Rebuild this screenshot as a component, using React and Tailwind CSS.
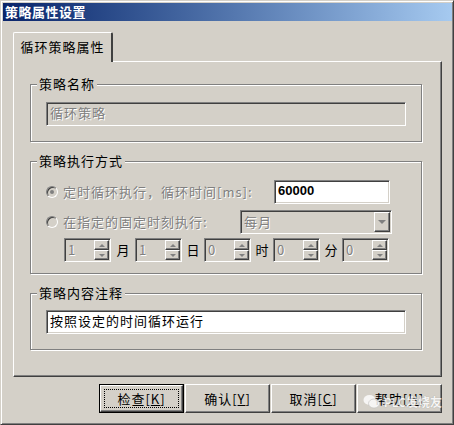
import React from "react";

const font = { fontFamily: '"Noto Sans CJK SC", "Liberation Sans", sans-serif' };

const sunken =
  "border border-t-[#808080] border-l-[#808080] border-b-white border-r-white shadow-[inset_1px_1px_0_#404040,inset_-1px_-1px_0_#d4d0c8]";
const raised =
  "border border-t-white border-l-white border-b-[#404040] border-r-[#404040] shadow-[inset_-1px_-1px_0_#808080]";
const disabledText = "text-[#808080] [text-shadow:1px_1px_0_#fff]";

function Group({ label, className, children }) {
  return (
    <div className={`relative border border-[#808080] shadow-[1px_1px_0_#fff,inset_1px_1px_0_#fff] ${className}`}>
      <span className="absolute left-[6px] top-[-9px] bg-[#d4d0c8] px-[2px] text-[13px] leading-[16px] tracking-[1px] text-black">
        {label}
      </span>
      {children}
    </div>
  );
}

function Radio({ checked }) {
  return (
    <div className="flex h-[12px] w-[12px] items-center justify-center rounded-full border border-t-[#808080] border-l-[#808080] border-b-white border-r-white shadow-[inset_1px_1px_0_#404040] bg-[#d4d0c8]">
      {checked && <div className="h-[4px] w-[4px] rounded-full bg-[#808080]" />}
    </div>
  );
}

function Tri({ up }) {
  return (
    <div
      className={`h-0 w-0 border-l-[3px] border-r-[3px] border-l-transparent border-r-transparent ${
        up ? "border-b-[3px] border-b-[#808080]" : "border-t-[3px] border-t-[#808080]"
      }`}
    />
  );
}

function Spin({ value }) {
  return (
    <div className={`flex h-[24px] w-[47px] items-stretch bg-[#d4d0c8] p-[1px] ${sunken}`}>
      <div className={`flex-1 pl-[2px] text-[13px] leading-[20px] ${disabledText}`}>{value}</div>
      <div className="flex w-[15px] flex-col">
        <div className={`flex flex-1 items-center justify-center bg-[#d4d0c8] ${raised}`}>
          <Tri up />
        </div>
        <div className={`flex flex-1 items-center justify-center bg-[#d4d0c8] ${raised}`}>
          <Tri />
        </div>
      </div>
    </div>
  );
}

function Btn({ label, hot, isDefault }) {
  const inner = (
    <div className={`relative flex h-full w-full items-center justify-center bg-[#d4d0c8] ${raised}`}>
      {isDefault && <div className="absolute inset-[3px] border border-dotted border-black" />}
      <span className="text-[13px] leading-[16px] tracking-[1px]">
        {label}[<span className="underline">{hot}</span>]
      </span>
    </div>
  );
  return (
    <div className={`h-[29px] w-[85px] ${isDefault ? "border border-black" : ""}`}>{inner}</div>
  );
}

export default function App() {
  return (
    <div
      style={font}
      className="h-[425px] w-[454px] overflow-hidden border border-t-[#d4d0c8] border-l-[#d4d0c8] border-r-[#404040] border-b-[#404040] bg-[#d4d0c8] pl-[2px] pt-[2px] pr-[1px] pb-[1px] shadow-[inset_1px_1px_0_#fff,inset_-1px_-1px_0_#808080] text-black"
    >
      {/* title bar */}
      <div className="flex h-[18px] items-center bg-gradient-to-r from-[#0a246a] to-[#a6caf0] pl-[2px]">
        <span className="text-[13px] font-bold leading-[18px] tracking-[0.5px] text-white">策略属性设置</span>
      </div>

      <div className="pl-[10px] pt-[11px]">
        {/* tab */}
        <div className="relative z-10 -mb-px flex h-[30px] w-[100px] items-center justify-center rounded-t-[2px] border-l border-t border-r-2 border-l-white border-t-white border-r-[#404040] bg-[#d4d0c8] pb-[2px]">
          <span className="text-[13px] leading-[16px] tracking-[1px]">循环策略属性</span>
        </div>

        {/* panel */}
        <div className="h-[316px] w-[429px] border-l border-t border-r border-b border-l-white border-t-white border-r-[#404040] border-b-[#404040] shadow-[inset_-1px_-1px_0_#808080] pl-[16px] pt-[22px]">
          <Group label="策略名称" className="h-[58px] w-[392px] pl-[15px] pt-[17px]">
            <div className={`h-[24px] w-[360px] bg-[#d4d0c8] pl-[3px] text-[13px] leading-[20px] tracking-[1px] ${sunken} ${disabledText}`}>
              循环策略
            </div>
          </Group>

          <Group label="策略执行方式" className="mt-[19px] h-[113px] w-[392px] pl-[15px] pt-[18px]">
            <div className="flex items-center">
              <div className="flex w-[228px] items-center">
                <Radio checked />
                <span className={`ml-[5px] text-[13px] leading-[16px] tracking-[1px] ${disabledText}`}>
                  定时循环执行，循环时间[ms]:
                </span>
              </div>
              <div className={`h-[24px] w-[116px] bg-white pl-[3px] text-[13px] font-bold leading-[20px] ${sunken}`} style={{ fontFamily: '"Liberation Sans", sans-serif' }}>
                60000
              </div>
            </div>
            <div className="mt-[6px] flex items-center">
              <div className="flex w-[194px] items-center">
                <Radio />
                <span className={`ml-[5px] text-[13px] leading-[16px] tracking-[1px] ${disabledText}`}>
                  在指定的固定时刻执行:
                </span>
              </div>
              <div className={`flex h-[24px] w-[152px] items-stretch bg-[#d4d0c8] p-[1px] ${sunken}`}>
                <div className={`flex-1 pl-[2px] text-[13px] leading-[20px] tracking-[1px] ${disabledText}`}>每月</div>
                <div className={`flex w-[16px] items-center justify-center bg-[#d4d0c8] ${raised}`}>
                  <div className="h-0 w-0 border-l-[4px] border-r-[4px] border-t-[4px] border-l-transparent border-r-transparent border-t-[#808080]" />
                </div>
              </div>
            </div>
            <div className="mt-[4px] ml-[18px] flex items-center text-[13px] leading-[16px]">
              <Spin value="1" />
              <span className="w-[24px] text-center">月</span>
              <Spin value="1" />
              <span className="w-[22px] text-center">日</span>
              <Spin value="0" />
              <span className="w-[22px] text-center">时</span>
              <Spin value="0" />
              <span className="w-[22px] text-center">分</span>
              <Spin value="0" />
            </div>
          </Group>

          <Group label="策略内容注释" className="mt-[19px] h-[57px] w-[392px] pl-[15px] pt-[16px]">
            <div className={`h-[24px] w-[360px] bg-white pl-[3px] text-[13px] leading-[20px] tracking-[1px] ${sunken}`}>
              按照设定的时间循环运行
            </div>
          </Group>
        </div>

        {/* buttons */}
        <div className="relative mt-[7px] flex w-[429px] justify-end gap-[1px]">
          <Btn label="检查" hot="K" isDefault />
          <Btn label="确认" hot="Y" />
          <Btn label="取消" hot="C" />
          <Btn label="帮助" hot="H" />
          <div className="pointer-events-none absolute right-[0px] top-[10px] flex items-center gap-[4px] opacity-80">
            <svg width="17" height="15" viewBox="0 0 17 15">
              <ellipse cx="6.5" cy="6" rx="6" ry="5" fill="#fff" />
              <ellipse cx="11" cy="9.5" rx="5.5" ry="4.5" fill="#fff" stroke="#bbb" strokeWidth="0.6" />
            </svg>
            <span className="text-[12px] font-bold leading-[14px] text-white [text-shadow:0_0_1px_#888]">PLC发烧友</span>
          </div>
        </div>
      </div>
    </div>
  );
}
